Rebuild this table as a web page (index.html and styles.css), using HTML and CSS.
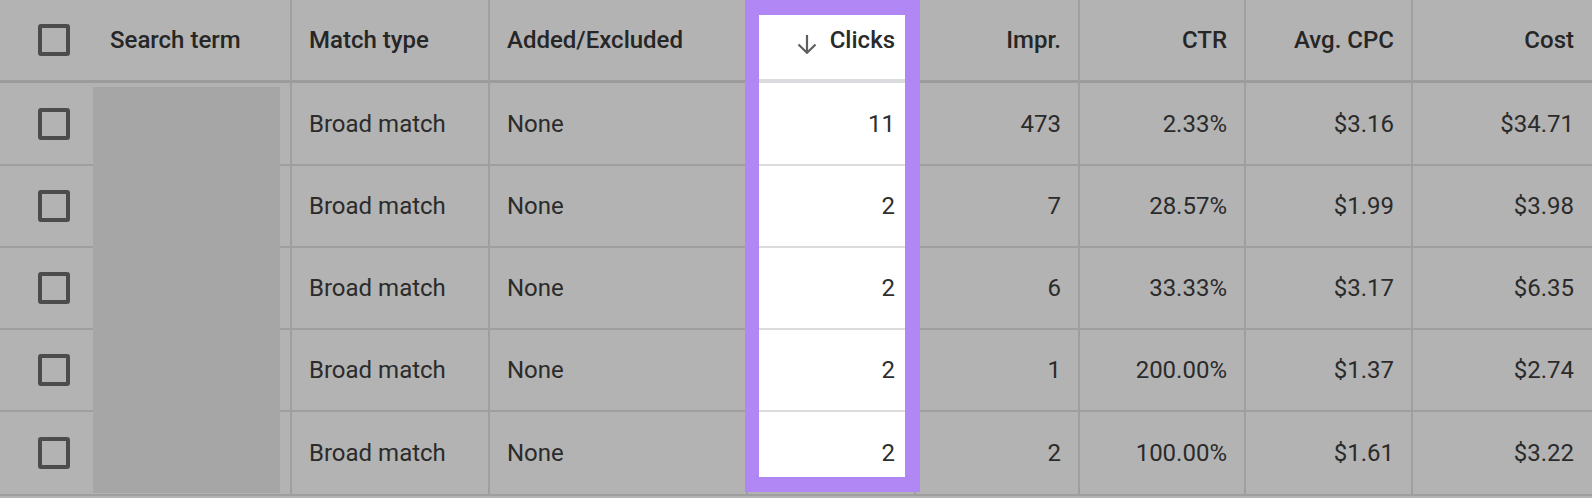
FILE: index.html
```html
<!DOCTYPE html>
<html lang="en">
<head>
<meta charset="utf-8">
<title>Search terms</title>
<link rel="stylesheet" href="styles.css">
</head>
<body>
<div class="table">
  <div class="row head">
    <div class="cell check"><span class="box"></span></div>
    <div class="cell term">Search term</div>
    <div class="cell match">Match type</div>
    <div class="cell added">Added/Excluded</div>
    <div class="cell num clicks"><svg class="sort" viewBox="0 0 22 20" width="22" height="20"><path d="M11 1v17.5M2.5 10.5L11 18.8l8.5-8.3" fill="none" stroke="#5f5f5f" stroke-width="2.2"/></svg><span>Clicks</span></div>
    <div class="cell num">Impr.</div>
    <div class="cell num">CTR</div>
    <div class="cell num">Avg. CPC</div>
    <div class="cell num last">Cost</div>
  </div>
  <div class="row first">
    <div class="cell check"><span class="box"></span></div>
    <div class="cell term"></div>
    <div class="cell match">Broad match</div>
    <div class="cell added">None</div>
    <div class="cell num clicks">11</div>
    <div class="cell num">473</div>
    <div class="cell num">2.33%</div>
    <div class="cell num">$3.16</div>
    <div class="cell num last">$34.71</div>
  </div>
  <div class="row">
    <div class="cell check"><span class="box"></span></div>
    <div class="cell term"></div>
    <div class="cell match">Broad match</div>
    <div class="cell added">None</div>
    <div class="cell num clicks">2</div>
    <div class="cell num">7</div>
    <div class="cell num">28.57%</div>
    <div class="cell num">$1.99</div>
    <div class="cell num last">$3.98</div>
  </div>
  <div class="row">
    <div class="cell check"><span class="box"></span></div>
    <div class="cell term"></div>
    <div class="cell match">Broad match</div>
    <div class="cell added">None</div>
    <div class="cell num clicks">2</div>
    <div class="cell num">6</div>
    <div class="cell num">33.33%</div>
    <div class="cell num">$3.17</div>
    <div class="cell num last">$6.35</div>
  </div>
  <div class="row">
    <div class="cell check"><span class="box"></span></div>
    <div class="cell term"></div>
    <div class="cell match">Broad match</div>
    <div class="cell added">None</div>
    <div class="cell num clicks">2</div>
    <div class="cell num">1</div>
    <div class="cell num">200.00%</div>
    <div class="cell num">$1.37</div>
    <div class="cell num last">$2.74</div>
  </div>
  <div class="row final">
    <div class="cell check"><span class="box"></span></div>
    <div class="cell term"></div>
    <div class="cell match">Broad match</div>
    <div class="cell added">None</div>
    <div class="cell num clicks">2</div>
    <div class="cell num">2</div>
    <div class="cell num">100.00%</div>
    <div class="cell num">$1.61</div>
    <div class="cell num last">$3.22</div>
  </div>
  <div class="redact"></div>
  <div class="highlight"></div>
</div>
</body>
</html>
```
FILE: styles.css
```css
html, body {
  margin: 0;
  padding: 0;
  background: #b3b3b3;
  overflow: hidden;
}
body {
  font-family: Roboto, "Liberation Sans", Arial, sans-serif;
  font-size: 24px;
  color: #2b2b2b;
}
.table {
  position: relative;
  width: 1592px;
}
.row {
  display: grid;
  grid-template-columns: 92px 200px 198px 258px 168px 164px 166px 167px 179px;
  height: 82px;
}
.row.first { height: 83px; }
.row.final { height: 84px; }
.row.head { height: 83px; }
.cell {
  box-sizing: border-box;
  display: flex;
  align-items: center;
  padding: 0 17px;
  border-right: 2px solid #9f9f9f;
  border-bottom: 2px solid #9f9f9f;
  white-space: nowrap;
}
.head .cell {
  border-bottom-width: 3px;
  border-bottom-color: #9b9b9b;
  font-weight: 500;
  color: #262626;
}
.cell.check {
  border-right: none;
  justify-content: flex-start;
  padding-left: 38px;
}
.cell.term { padding-left: 18px; }
.cell.num {
  justify-content: flex-end;
}
.cell.last { border-right: none; padding-right: 18px; }
.cell.clicks {
  background: #ffffff;
  border-bottom-color: #dcdcde;
  padding-right: 19px;
  color: #2e2e2e;
}
.final .cell.clicks {
  background: linear-gradient(#ffffff, #ffffff) top / 100% 80px no-repeat;
  border-bottom-color: #9f9f9f;
}
.head .cell.clicks {
  border-bottom-color: #dadbde;
  border-bottom-width: 4px;
  color: #2a2a2a;
}
.sort {
  margin-right: 12px;
  margin-top: 8px;
}
.box {
  display: block;
  width: 32px;
  height: 32px;
  box-sizing: border-box;
  border: 4px solid #4c4c4c;
  border-radius: 3px;
}
.redact {
  position: absolute;
  left: 93px;
  top: 87px;
  width: 187px;
  height: 406px;
  background: #a6a6a6;
}
.highlight {
  position: absolute;
  left: 745px;
  top: 0;
  width: 175px;
  height: 492px;
  box-sizing: border-box;
  border: 15px solid #b087f5;
  border-left-width: 14px;
}
```
